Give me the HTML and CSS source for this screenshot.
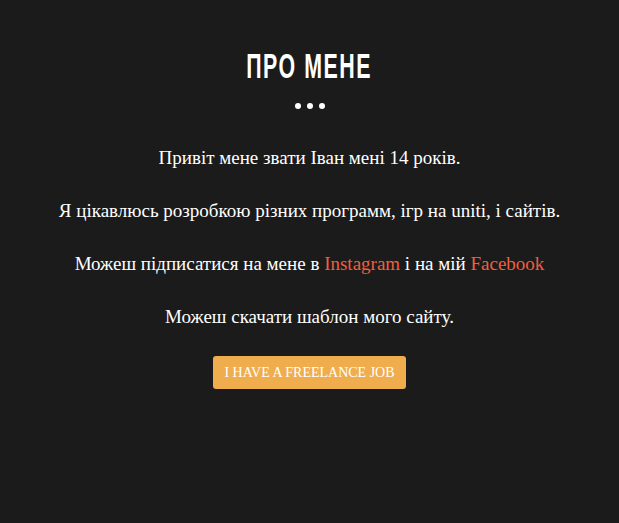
FILE: index.html
```html
<!DOCTYPE html>
<html lang="uk">
<head>
<meta charset="utf-8">
<link rel="stylesheet" href="styles.css">
</head>
<body>
<section class="about">
  <h2 class="title">ПРО МЕНЕ</h2>
  <div class="dots"><span></span><span></span><span></span></div>
  <p>Привіт мене звати Іван мені 14 років.</p>
  <p>Я цікавлюсь розробкою різних программ, ігр на uniti, і сайтів.</p>
  <p>Можеш підписатися на мене в <a href="#">Instagram</a> і на мій <a href="#">Facebook</a></p>
  <p>Можеш скачати шаблон мого сайту.</p>
  <a class="btn" href="#">I have a freelance job</a>
</section>
</body>
</html>
```
FILE: styles.css
```css
html, body {
  margin: 0;
  background: #1b1b1b;
  height: 100%;
}
body {
  font-family: "Liberation Serif", serif;
  color: #fff;
}
.about {
  display: flex;
  flex-direction: column;
  align-items: center;
  padding-top: 49px;
}
.title {
  margin: 0;
  font-family: "Liberation Sans", sans-serif;
  font-weight: bold;
  font-size: 35px;
  line-height: 34px;
  letter-spacing: 2.5px;
  transform: scaleX(0.61);
  white-space: nowrap;
}
.dots {
  display: flex;
  gap: 6px;
  margin-top: 20px;
}
.dots span {
  width: 6px;
  height: 6px;
  border-radius: 50%;
  background: #fff;
}
.about p {
  margin: 0;
  font-size: 19px;
  line-height: 22px;
}
.dots + p { margin-top: 38px; }
.about p + p { margin-top: 31px; }
.about a {
  color: #f05f3e;
  text-decoration: none;
}
.about .btn {
  margin-top: 28px;
  background: #f0ad4e;
  color: #fff;
  text-transform: uppercase;
  font-size: 14px;
  line-height: 33px;
  padding: 0 11px;
  border-radius: 3px;
  white-space: nowrap;
  text-align: center;
}
```
